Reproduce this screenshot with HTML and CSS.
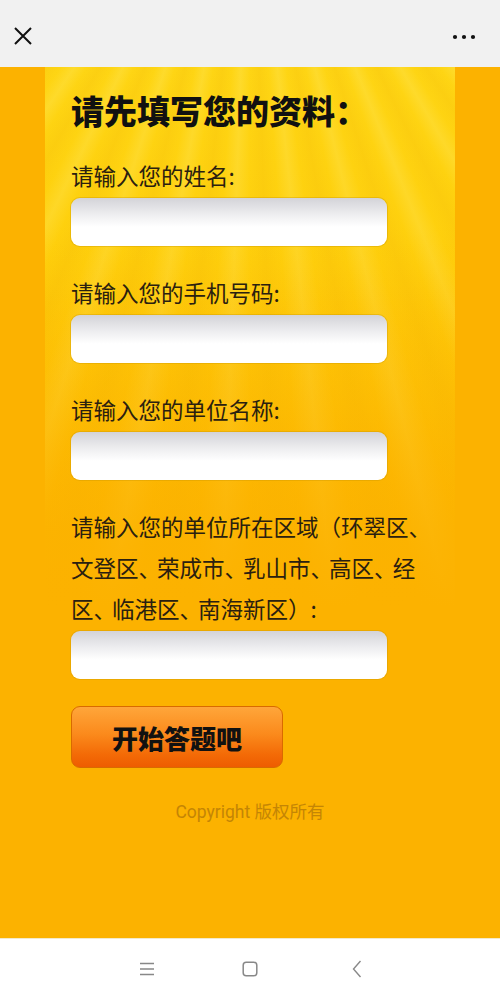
FILE: index.html
```
<!DOCTYPE html>
<html lang="zh">
<head>
<meta charset="utf-8">
<link rel="stylesheet" href="styles.css">
</head>
<body>
<div class="app">
  <header class="topbar">
    <svg class="close" width="20" height="20" viewBox="0 0 20 20"><path d="M2 2 L18 18 M18 2 L2 18" stroke="#111" stroke-width="2" fill="none"/></svg>
    <svg class="more" width="24" height="6" viewBox="0 0 24 6"><circle cx="3" cy="3" r="2.1" fill="#111"/><circle cx="12" cy="3" r="2.1" fill="#111"/><circle cx="21" cy="3" r="2.1" fill="#111"/></svg>
  </header>
  <main class="main">
    <div class="panel">
      <div class="panel-inner">
        <h1 class="title">请先填写您的资料：</h1>
        <div class="field">
          <label class="label">请输入您的姓名:</label>
          <div class="input"></div>
        </div>
        <div class="field">
          <label class="label">请输入您的手机号码:</label>
          <div class="input"></div>
        </div>
        <div class="field">
          <label class="label">请输入您的单位名称:</label>
          <div class="input"></div>
        </div>
        <div class="field">
          <label class="label">请输入您的单位所在区域（环翠区<span class="dun">、</span><br>文登区<span class="dun">、</span>荣成市<span class="dun">、</span>乳山市<span class="dun">、</span>高区<span class="dun">、</span>经<br>区<span class="dun">、</span>临港区<span class="dun">、</span>南海新区）:</label>
          <div class="input"></div>
        </div>
        <button class="start">开始答题吧</button>
        <p class="copy">Copyright 版权所有</p>
      </div>
    </div>
  </main>
  <nav class="navbar">
    <svg width="16" height="14" viewBox="0 0 16 14"><path d="M1 1.5 H15 M1 7 H15 M1 12.5 H15" stroke="#888" stroke-width="1.4"/></svg>
    <svg width="16" height="16" viewBox="0 0 16 16"><rect x="1.2" y="1.2" width="13.6" height="13.6" rx="3" fill="none" stroke="#888" stroke-width="1.5"/></svg>
    <svg width="10" height="18" viewBox="0 0 10 18"><path d="M8.5 1 L1.5 9 L8.5 17" fill="none" stroke="#888" stroke-width="1.4"/></svg>
  </nav>
</div>
</body>
</html>
```
FILE: styles.css
```
* { box-sizing: border-box; }
html, body { margin: 0; padding: 0; }
body {
  font-family: "Noto Sans CJK SC", "Noto Sans", sans-serif;
  width: 500px;
  height: 999px;
  overflow: hidden;
}
.app { display: flex; flex-direction: column; height: 999px; }
.topbar {
  height: 67px;
  background: #f1f1f1;
  display: flex;
  align-items: center;
  justify-content: space-between;
  padding: 0 24px 0 13px;
}
.topbar .close { margin-top: 5px; }
.topbar .more { margin-top: 6px; }
.main {
  height: 871px;
  background: #fcb200;
}
.panel {
  margin: 0 45px;
  height: 100%;
  background:
    repeating-conic-gradient(from 180deg at 50% -260px, rgba(255,245,150,0.00) 0deg, rgba(255,245,150,0.18) 2deg, rgba(255,245,150,0.00) 4deg, rgba(230,160,0,0.10) 6deg, rgba(255,245,150,0.00) 8deg),
    linear-gradient(to bottom, #fed514 0px, #fecf0c 200px, #fdc305 340px, #fcb600 460px, #fcb200 540px);
}
.panel-inner {
  height: 100%;
  padding: 22px 0 0 26px;
  background: linear-gradient(to bottom, rgba(252,178,0,0) 0px, rgba(252,178,0,0) 160px, rgba(252,178,0,0.45) 360px, rgba(252,178,0,1) 540px);
}
.title {
  margin: 0;
  font-size: 33px;
  line-height: 42px;
  font-weight: 900;
  color: #111;
}
.field { margin-top: 26px; width: 316px; }
.title + .field { margin-top: 24px; }
.label {
  display: block;
  font-size: 22.5px;
  line-height: 41px;
  color: #2a2010;
  white-space: nowrap;
}
.dun { letter-spacing: -4px; }
.input {
  height: 48px;
  margin-top: 2px;
  border-radius: 9px;
  background: linear-gradient(to bottom, #d3d3d8 0%, #eeeef0 35%, #ffffff 60%, #ffffff 100%);
  box-shadow: 0 0 0 1px rgba(200,150,0,0.35);
}
.start {
  display: block;
  margin-top: 27px;
  width: 212px;
  height: 62px;
  border-radius: 9px;
  border: 1px solid #d96a00;
  background: linear-gradient(to bottom, #ffa63a 0%, #fb8a1c 45%, #f36a06 80%, #ee5c00 100%);
  font-family: inherit;
  font-size: 26px;
  font-weight: 900;
  color: #111;
  padding: 0;
}
.copy {
  margin: 33px 0 0 -26px;
  width: 410px;
  text-align: center;
  font-size: 17.5px;
  line-height: 22px;
  color: #c48505;
  font-family: "Roboto", "Noto Sans CJK SC", sans-serif;
}
.navbar {
  height: 61px;
  background: #fff;
  border-top: 1px solid #f3eacb;
  display: flex;
  align-items: center;
  padding: 0 0 0 139px;
  gap: 87px;
}
.navbar svg:nth-child(3) { margin-left: 7px; }
```
